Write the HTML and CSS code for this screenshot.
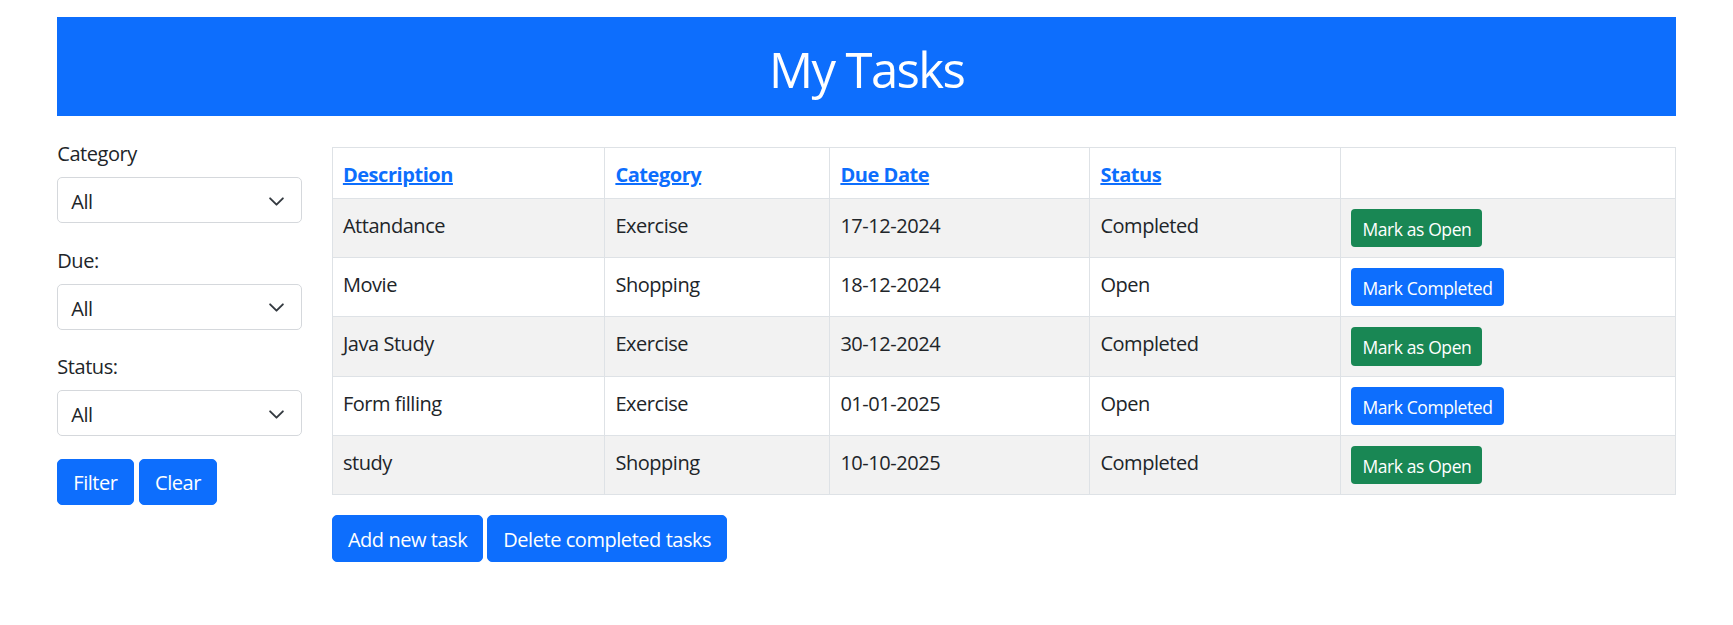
FILE: index.html
```html
<!DOCTYPE html>
<html lang="en">
<head>
<meta charset="utf-8">
<title>My Tasks</title>
<link rel="stylesheet" href="styles.css">
</head>
<body>
<div class="page">
  <header class="banner"><h1 class="banner-title">My Tasks</h1></header>
  <div class="layout">
    <aside class="filters">
      <div class="field">
        <label class="field-label">Category</label>
        <div class="select"><span class="select-value">All</span><svg class="chev" viewBox="0 0 16 16" width="17" height="17"><path d="M2 5l6 6 6-6" fill="none" stroke="#343a40" stroke-width="1.8" stroke-linecap="round" stroke-linejoin="round"/></svg></div>
      </div>
      <div class="field">
        <label class="field-label">Due:</label>
        <div class="select"><span class="select-value">All</span><svg class="chev" viewBox="0 0 16 16" width="17" height="17"><path d="M2 5l6 6 6-6" fill="none" stroke="#343a40" stroke-width="1.8" stroke-linecap="round" stroke-linejoin="round"/></svg></div>
      </div>
      <div class="field">
        <label class="field-label">Status:</label>
        <div class="select"><span class="select-value">All</span><svg class="chev" viewBox="0 0 16 16" width="17" height="17"><path d="M2 5l6 6 6-6" fill="none" stroke="#343a40" stroke-width="1.8" stroke-linecap="round" stroke-linejoin="round"/></svg></div>
      </div>
      <div class="btn-row">
        <button class="btn btn-primary">Filter</button>
        <button class="btn btn-primary">Clear</button>
      </div>
    </aside>
    <main class="content">
      <table class="tasks">
        <colgroup>
          <col class="col-desc"><col class="col-cat"><col class="col-due"><col class="col-status"><col class="col-action">
        </colgroup>
        <thead>
          <tr>
            <th><a href="#" class="sort-link">Description</a></th>
            <th><a href="#" class="sort-link">Category</a></th>
            <th><a href="#" class="sort-link">Due Date</a></th>
            <th><a href="#" class="sort-link">Status</a></th>
            <th></th>
          </tr>
        </thead>
        <tbody>
          <tr class="stripe">
            <td>Attandance</td><td>Exercise</td><td>17-12-2024</td><td>Completed</td>
            <td class="action-cell"><button class="btn-sm btn-success">Mark as Open</button></td>
          </tr>
          <tr>
            <td>Movie</td><td>Shopping</td><td>18-12-2024</td><td>Open</td>
            <td class="action-cell"><button class="btn-sm btn-primary">Mark Completed</button></td>
          </tr>
          <tr class="stripe">
            <td>Java Study</td><td>Exercise</td><td>30-12-2024</td><td>Completed</td>
            <td class="action-cell"><button class="btn-sm btn-success">Mark as Open</button></td>
          </tr>
          <tr>
            <td>Form filling</td><td>Exercise</td><td>01-01-2025</td><td>Open</td>
            <td class="action-cell"><button class="btn-sm btn-primary">Mark Completed</button></td>
          </tr>
          <tr class="stripe">
            <td>study</td><td>Shopping</td><td>10-10-2025</td><td>Completed</td>
            <td class="action-cell"><button class="btn-sm btn-success">Mark as Open</button></td>
          </tr>
        </tbody>
      </table>
      <div class="actions">
        <button class="btn btn-primary btn-lg">Add new task</button>
        <button class="btn btn-primary btn-lg">Delete completed tasks</button>
      </div>
    </main>
  </div>
</div>
</body>
</html>
```

FILE: styles.css
```css
* { box-sizing: border-box; }

html, body {
  margin: 0;
  padding: 0;
  background: #ffffff;
}

body {
  font-family: "Open Sans", "Noto Sans", "Liberation Sans", sans-serif;
  font-size: 20px;
  line-height: 30px;
  letter-spacing: -0.45px;
  color: #212529;
}

.page {
  padding: 17px 57px 0 57.3px;
}

.banner {
  background: #0d6efd;
  height: 99px;
  padding-top: 22px;
  text-align: center;
}

.banner-title {
  margin: 0;
  color: #ffffff;
  font-size: 49px;
  font-weight: 400;
  line-height: 60px;
  letter-spacing: -1.6px;
}

.layout {
  display: flex;
  gap: 30.2px;
  margin-top: 23px;
  align-items: flex-start;
}

.filters {
  width: 244.4px;
  flex: 0 0 244.4px;
}

.field {
  margin-bottom: 22.5px;
}

.field-label {
  display: block;
  margin-bottom: 8px;
}

.select {
  height: 46px;
  border: 1px solid #d5d8dc;
  border-radius: 5px;
  padding: 0 13px;
  display: flex;
  align-items: center;
  justify-content: space-between;
  background: #ffffff;
}

.select-value {
  padding-top: 4px;
}

.chev {
  margin-right: 3px;
  margin-top: 2px;
}

.btn-row {
  display: flex;
  gap: 5.5px;
}

.btn {
  font-family: inherit;
  font-size: 20px;
  line-height: 30px;
  letter-spacing: -0.45px;
  height: 46px;
  padding: 2px 15px 0;
  border: 1px solid transparent;
  border-radius: 5px;
  cursor: pointer;
}

.btn-lg {
  height: 47px;
}

.btn-primary {
  background: #0d6efd;
  border-color: #0d6efd;
  color: #ffffff;
}

.btn-success {
  background: #198754;
  border-color: #198754;
  color: #ffffff;
}

.content {
  flex: 1;
  padding-top: 8px;
}

.tasks {
  width: 100%;
  border-collapse: collapse;
  table-layout: fixed;
  border: 1px solid #dee2e6;
}

.col-desc { width: 272.5px; }
.col-cat { width: 225px; }
.col-due { width: 260px; }
.col-status { width: 251px; }

.tasks th,
.tasks td {
  border: 1px solid #dee2e6;
  padding: 12px 10px 8px;
  text-align: left;
  vertical-align: top;
  line-height: 30px;
}

.tasks td.action-cell {
  padding: 10px 10px;
}

.tasks th {
  font-weight: 700;
}

.sort-link {
  color: #0d6efd;
  text-decoration: underline;
}

.stripe td {
  background: #f2f2f2;
}

.btn-sm {
  font-family: inherit;
  font-size: 17.5px;
  line-height: 26.2px;
  letter-spacing: -0.4px;
  padding: 6px 10px 4px;
  border: 1px solid transparent;
  border-radius: 4px;
  display: inline-block;
}

.actions {
  display: flex;
  gap: 4px;
  margin-top: 20px;
}
```
